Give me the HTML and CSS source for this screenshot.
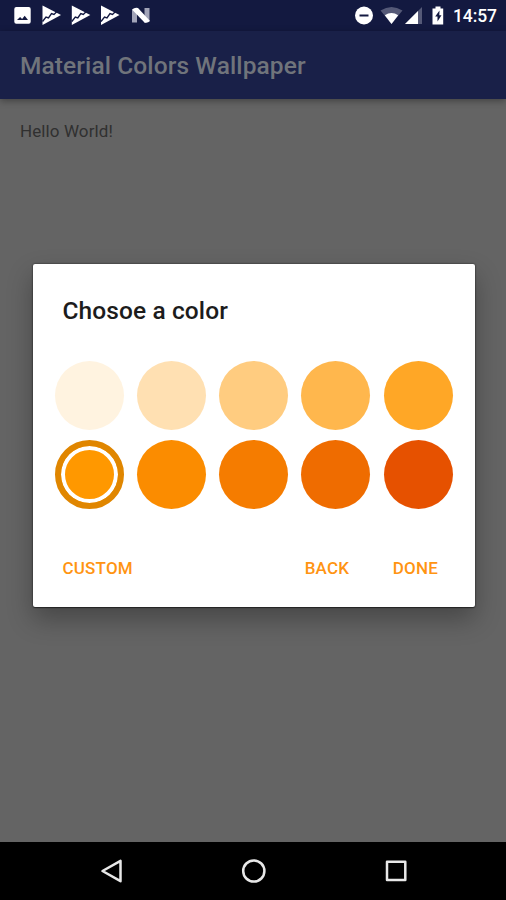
FILE: index.html
```html
<!DOCTYPE html>
<html lang="en">
<head>
<meta charset="utf-8">
<title>Material Colors Wallpaper</title>
<link rel="stylesheet" href="styles.css">
</head>
<body>
<div class="screen">
  <header class="status-bar">
    <svg class="status-icons" width="160" height="31" viewBox="0 0 160 31">
      <path fill="#fff" fill-rule="evenodd" d="M16.300 7h12.400q2 0 2 2v12.700q0 2-2 2H16.300q-2 0-2-2V9q0-2 2-2zM17 20h11l-3.300-4.200-2.600 3.100-2-2z"/>
      <g id="play">
        <path fill="#fff" d="M42.500 5.500L61 15 42.500 25z"/>
        <path fill="none" stroke="#131940" stroke-width="1.400" d="M42.500 21.500l3.500-4.500 2.500 1 3-4.500 2.500 1 4.500-4.500"/>
      </g>
      <use href="#play" x="29.300"/>
      <use href="#play" x="58.500"/>
      <path fill="#a2a4b8" d="M132 10l5-2v14.500h-5zM144.500 8h5v13l-5 2z"/>
      <path fill="#fff" d="M132 9.500q3-2.500 6-1.500L150 21q-2.500 2.500-5.500 1.500z"/>
    </svg>
    <svg class="system-icons" width="94" height="31" viewBox="0 0 94 31">
      <circle cx="9" cy="15.500" r="9" fill="#fff"/>
      <path stroke="#131940" stroke-width="2" d="M4.500 15.500h9"/>
      <path fill="#555977" d="M25.500 10.500q11-7 22 0L36.500 24z"/>
      <path fill="#fff" d="M29.800 15.200q6.700-4.400 13.400 0L36.500 24z"/>
      <path fill="#555977" d="M67 7v17H50z"/>
      <path fill="#fff" d="M63 11v13H50z"/>
      <path fill="#fff" d="M80.500 6.500h5v2h2.700V24.500H77.500V8.500h3z"/>
      <path fill="#131940" d="M84.500 10.500l-4.300 6h2.300v5l4-6.300h-2.200z"/>
    </svg>
    <span class="clock">14:57</span>
  </header>
  <div class="app-bar"><h1 class="app-title">Material Colors Wallpaper</h1></div>
  <main class="content">
    <p class="hello">Hello World!</p>
    <section class="dialog">
      <h2 class="dialog-title">Chosoe a color</h2>
      <div class="palette">
        <span class="swatch orange-50"></span>
        <span class="swatch orange-100"></span>
        <span class="swatch orange-200"></span>
        <span class="swatch orange-300"></span>
        <span class="swatch orange-400"></span>
        <span class="swatch orange-500 selected"></span>
        <span class="swatch orange-600"></span>
        <span class="swatch orange-700"></span>
        <span class="swatch orange-800"></span>
        <span class="swatch orange-900"></span>
      </div>
      <div class="actions">
        <span class="action custom">CUSTOM</span>
        <span class="action back">BACK</span>
        <span class="action done">DONE</span>
      </div>
    </section>
  </main>
  <nav class="nav-bar">
    <svg width="506" height="58" viewBox="0 0 506 58" fill="none" stroke="#e8e8e8" stroke-width="2.500" stroke-linejoin="round">
      <path d="M102.500 29l18-10.200v20.400z"/>
      <circle cx="253.800" cy="29" r="10.600"/>
      <path d="M387 19.800h18.300v18.300H387z"/>
    </svg>
  </nav>
</div>
</body>
</html>
```

FILE: styles.css
```css
* { box-sizing: border-box; margin: 0; padding: 0; }
body { font-family: Roboto, sans-serif; background: #646464; }
.screen { width: 506px; height: 900px; display: flex; flex-direction: column; overflow: hidden; }
svg { display: block; flex: none; }
.status-bar { height: 31px; flex: none; display: flex; background: #131940; color: #fff; }
.system-icons { margin-left: 195px; }
.clock { margin-left: 4px; font-size: 17.500px; font-weight: 500; line-height: 32px; letter-spacing: -.1px; }
.app-bar { height: 68px; flex: none; padding-left: 20px; background: #192048; box-shadow: 0 2px 7px rgba(0, 0, 0, .35); }
.app-title { font-size: 24.500px; font-weight: 500; line-height: 69px; letter-spacing: .1px; color: #70747b; white-space: nowrap; }
.content { flex: 1; }
.hello { margin: 22px 0 0 20px; font-size: 17px; line-height: 20px; letter-spacing: .1px; color: #303030; }
.dialog {
  width: 441.500px; height: 342.500px; margin: 123px 0 0 33px;
  background: #fff; border-radius: 2px;
  box-shadow: 0 0 2px rgba(0, 0, 0, .75), 0 1px 1px rgba(0, 0, 0, .4), 0 12px 26px rgba(0, 0, 0, .3);
}
.dialog-title { padding: 32px 0 0 29.500px; font-size: 24.500px; font-weight: 500; line-height: 30px; letter-spacing: .1px; color: #1c1c1c; }
.palette { display: grid; grid-template-columns: repeat(5, 69px); column-gap: 13.300px; row-gap: 10px; margin: 34.500px 0 0 21.500px; }
.swatch { height: 69px; border-radius: 50%; }
.orange-50 { background: #fff3e0; }
.orange-100 { background: #ffe0b2; }
.orange-200 { background: #ffcc80; }
.orange-300 { background: #ffb74d; }
.orange-400 { background: #ffa726; }
.orange-500 { background: #ff9800; }
.orange-600 { background: #fb8c00; }
.orange-700 { background: #f57c00; }
.orange-800 { background: #ef6c00; }
.orange-900 { background: #e65100; }
.selected { border: 6px solid #e08600; box-shadow: inset 0 0 0 4px #fff; }
.actions { display: flex; margin: 48.500px 36.500px 0 29.500px; line-height: 22px; }
.action { font-size: 17px; font-weight: 500; letter-spacing: .2px; color: #ff9412; }
.back { margin-left: auto; }
.done { margin-left: 43.500px; }
.nav-bar { height: 58px; flex: none; background: #000; }
```
